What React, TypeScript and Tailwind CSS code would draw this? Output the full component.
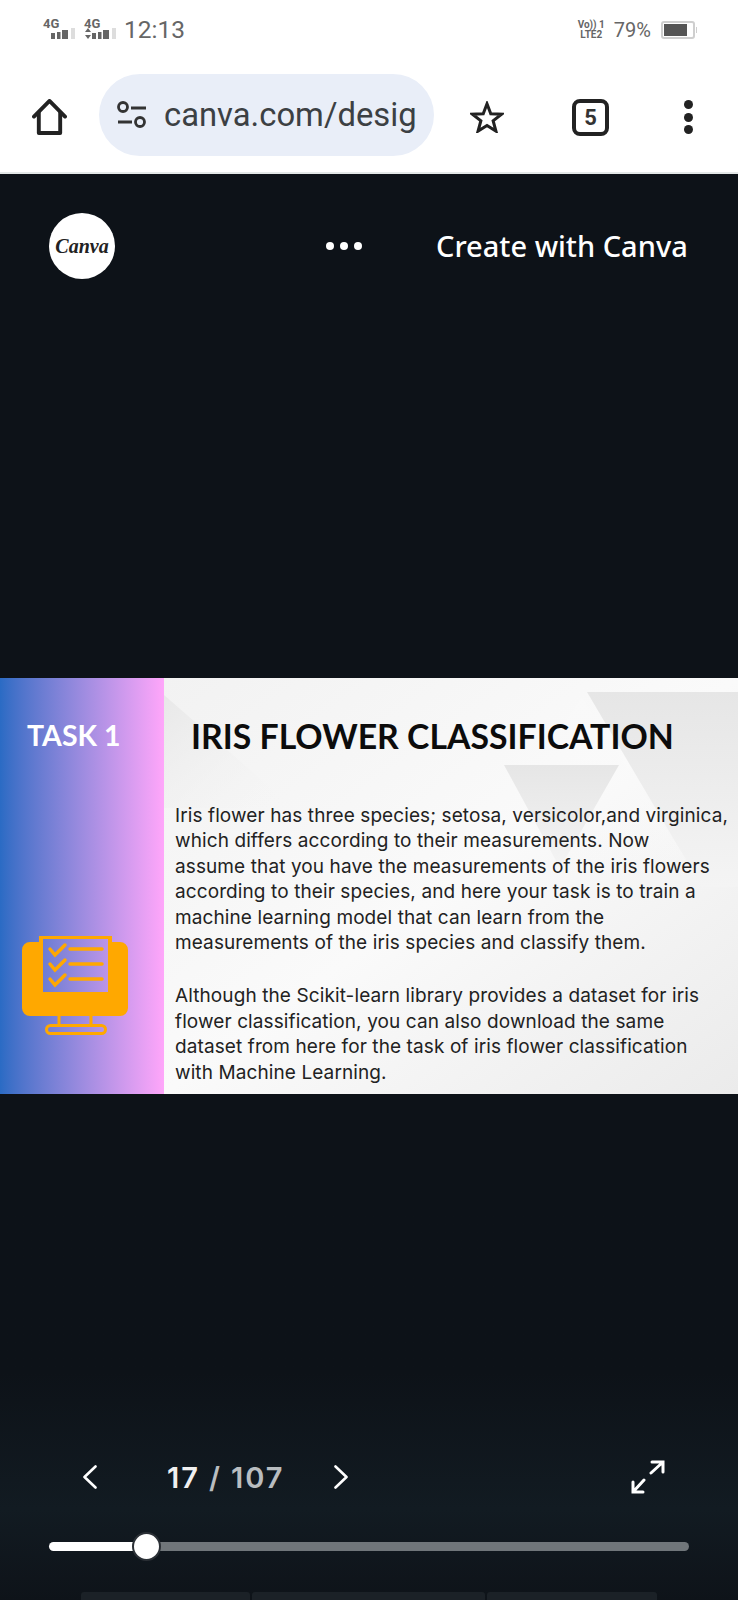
function SignalBars({ arrows }: { arrows?: boolean }) {
  return (
    <svg width="33" height="11" viewBox="0 0 33 11" className="absolute left-0 top-[10px]">
      {arrows && <path d="M4 0 L7 4 H1 Z M4 11 L1 7 H7 Z" fill="#666" />}
      <rect x="8" y="5" width="4" height="6" fill="#666" />
      <rect x="14" y="4" width="3.5" height="7" fill="#666" />
      <rect x="19" y="2" width="6" height="9" fill="#666" />
      <rect x="28" y="0" width="4" height="11" fill="#ddd" />
    </svg>
  );
}

function StatusBar() {
  return (
    <div className="flex h-[60px] items-center justify-between pl-[43px] pr-[41px] text-[#666]">
      <div className="flex items-center">
        <div className="relative h-[24px] w-[32px]">
          <span className="absolute left-0 top-[-1px] text-[13px] font-bold leading-[14px]">4G</span>
          <SignalBars />
        </div>
        <div className="relative ml-[9px] h-[24px] w-[32px]">
          <span className="absolute left-0 top-[-1px] text-[13px] font-bold leading-[14px]">4G</span>
          <SignalBars arrows />
        </div>
        <span className="ml-[8px] text-[24.5px] leading-none">12:13</span>
      </div>
      <div className="flex items-center">
        <div className="flex flex-col items-center text-[10px] font-bold leading-[10px]">
          <span>Vo)) 1</span>
          <span>LTE2</span>
        </div>
        <span className="ml-[9px] text-[20px] leading-none">79%</span>
        <div className="ml-[10px] flex h-[18px] w-[34px] items-center rounded-[3px] border-2 border-[#cfcfcf] pl-[1px]">
          <div className="h-[12px] w-[23px] bg-[#555]" />
        </div>
        <div className="ml-[1px] h-[6px] w-[1px] bg-[#cfcfcf]" />
      </div>
    </div>
  );
}

function Toolbar() {
  return (
    <div className="flex h-[114px] items-start border-b-2 border-[#e3e7e7] pt-[14px]">
      <div className="flex h-[86px] w-[99px] items-center pl-[32px]">
        <svg width="35" height="37" viewBox="0 0 36 38" fill="none" stroke="#222" strokeWidth="4" strokeLinejoin="round" strokeLinecap="round">
          <path d="M2 18 L18 2 L34 18" />
          <path d="M7 14 V35 H29 V14" />
        </svg>
      </div>
      <div className="flex h-[82px] w-[335px] items-center rounded-full bg-[#e9eef8] pl-[17px]">
        <svg width="32" height="28" viewBox="0 0 32 28" fill="none" stroke="#333" strokeWidth="2.8" className="shrink-0">
          <circle cx="7" cy="6" r="4.5" />
          <circle cx="24" cy="21" r="4.5" />
          <path d="M15 7 H30 M2 21 H16" />
        </svg>
        <span className="ml-[16px] text-[32.8px] leading-none whitespace-nowrap text-[#3c4043]">
          canva.com/desig
        </span>
      </div>
      <div className="ml-[35px] flex h-[86px] w-[36px] items-center justify-center">
        <svg width="34" height="32" viewBox="0 0 36 34" fill="none" stroke="#222" strokeWidth="3.2" strokeLinejoin="miter">
          <path d="M18 3 L22 13.5 L33.5 14 L24.5 21 L27.5 32 L18 26 L8.5 32 L11.5 21 L2.5 14 L14 13.5 Z" />
        </svg>
      </div>
      <div className="ml-[67px] flex h-[86px] items-center">
        <div className="flex h-[37px] w-[37px] items-center justify-center rounded-[8px] border-4 border-[#222] text-[22px] font-bold text-[#333]">
          5
        </div>
      </div>
      <div className="ml-[75px] flex h-[86px] flex-col items-center justify-center gap-[3.5px]">
        <div className="h-[9px] w-[9px] rounded-full bg-[#222]" />
        <div className="h-[9px] w-[9px] rounded-full bg-[#222]" />
        <div className="h-[9px] w-[9px] rounded-full bg-[#222]" />
      </div>
    </div>
  );
}

function CanvaHeader() {
  return (
    <div className="flex h-[504px] items-start pt-[39px] pl-[49px]">
      <div className="flex h-[66px] w-[66px] items-center justify-center rounded-full bg-white">
        <span className="text-[20px] font-bold italic text-[#222] [font-family:'Liberation_Serif',serif]">Canva</span>
      </div>
      <div className="ml-[211px] flex h-[66px] items-center gap-[6px]">
        <div className="h-[8px] w-[8px] rounded-full bg-white" />
        <div className="h-[8px] w-[8px] rounded-full bg-white" />
        <div className="h-[8px] w-[8px] rounded-full bg-white" />
      </div>
      <div className="ml-[74px] flex h-[66px] items-center whitespace-nowrap text-[29px] font-medium text-white [font-family:'Noto_Sans',sans-serif]">
        Create with Canva
      </div>
    </div>
  );
}

function TaskIcon() {
  return (
    <svg width="106" height="100" viewBox="0 0 106 100" fill="none" stroke="#ffa800">
      <path
        fill="#ffa800"
        stroke="none"
        fillRule="evenodd"
        d="M8 7 H17 V1 H90 V7 H98 a8 8 0 0 1 8 8 V73 a8 8 0 0 1-8 8 H8 a8 8 0 0 1-8-8 V15 a8 8 0 0 1 8-8Z M21 4 V57 H86 V4Z"
      />
      <g strokeWidth="3.5" strokeLinecap="round">
        <path d="M28 14 L33 20 L43 10 M48 14 H80" />
        <path d="M28 29 L33 35 L43 25 M48 29 H80" />
        <path d="M28 44 L33 50 L43 40 M48 44 H80" />
      </g>
      <path d="M37 81 V91 M69 81 V91" strokeWidth="3" />
      <rect x="24.5" y="90.5" width="59" height="8" rx="4" strokeWidth="3" />
    </svg>
  );
}

function Slide() {
  return (
    <div className="flex h-[416px] w-full">
      <div className="flex w-[164px] shrink-0 flex-col bg-gradient-to-r from-[#2a6bc4] to-[#ffa6fa]">
        <div className="mt-[39px] pl-[27px] text-[28.5px] font-bold leading-[36px] text-white [font-family:Lato,sans-serif]">TASK 1</div>
        <div className="mt-[182px] pl-[22px]">
          <TaskIcon />
        </div>
      </div>
      <div className="relative flex-1 overflow-hidden bg-gradient-to-br from-[#f2f2f2] via-[#fafafa] to-[#ebebeb]">
        {/* faint triangles behind the text */}
        <svg width="574" height="416" viewBox="0 0 574 416" className="absolute left-0 top-0">
          <defs>
            <linearGradient id="fadeDown" x1="0" y1="0" x2="0" y2="1">
              <stop offset="0" stopColor="#e6e6e6" />
              <stop offset="1" stopColor="#f4f4f4" />
            </linearGradient>
            <linearGradient id="fadeRight" x1="0" y1="0" x2="1" y2="1">
              <stop offset="0" stopColor="#e8e8e8" />
              <stop offset="1" stopColor="#f6f6f6" stopOpacity="0" />
            </linearGradient>
            <linearGradient id="paleDown" x1="0" y1="0" x2="0" y2="1">
              <stop offset="0" stopColor="#f9f9f9" stopOpacity="0.9" />
              <stop offset="1" stopColor="#f9f9f9" stopOpacity="0" />
            </linearGradient>
          </defs>
          <path d="M0 17 L130 130 L0 130 Z" fill="url(#fadeRight)" />
          <path d="M423 14 H574 V209 H538 Z" fill="url(#fadeDown)" />
          <path d="M418 19 L540 209 H290 Z" fill="url(#paleDown)" />
          <path d="M340 87 H455 L396 190 Z" fill="url(#fadeDown)" />
        </svg>
        <div className="relative">
          <h1 className="mt-[39px] ml-[27px] whitespace-nowrap text-[33.8px] font-bold leading-[38px] text-[#0c0c0c] [font-family:Lato,sans-serif]">
            IRIS FLOWER CLASSIFICATION
          </h1>
          <p className="mt-[48px] ml-[11px] whitespace-nowrap text-[19px] leading-[25.4px] tracking-[0.1px] text-[#222] [font-family:Inter,sans-serif]">
            Iris flower has three species; setosa, versicolor,and virginica,
            <br />
            which differs according to their measurements. Now
            <br />
            assume that you have the measurements of the iris flowers
            <br />
            according to their species, and here your task is to train a
            <br />
            machine learning model that can learn from the
            <br />
            measurements of the iris species and classify them.
          </p>
          <p className="mt-[28px] ml-[11px] whitespace-nowrap text-[19px] leading-[25.4px] tracking-[0.1px] text-[#222] [font-family:Inter,sans-serif]">
            Although the Scikit-learn library provides a dataset for iris
            <br />
            flower classification, you can also download the same
            <br />
            dataset from here for the task of iris flower classification
            <br />
            with Machine Learning.
          </p>
        </div>
      </div>
    </div>
  );
}

function Controls() {
  return (
    <div className="flex flex-1 flex-col bg-gradient-to-b from-[#0d1218] from-55% via-[#121b22] via-82% to-[#0e1319] pt-[366px]">
      <div className="flex h-[34px] items-center text-white">
        <svg width="14" height="24" viewBox="0 0 14 24" fill="none" stroke="#fff" strokeWidth="2.6" strokeLinecap="round" strokeLinejoin="round" className="ml-[83px]">
          <path d="M12.5 1.5 L1.5 12 L12.5 22.5" />
        </svg>
        <span className="ml-[70px] whitespace-nowrap text-[29px] font-semibold leading-none tracking-[1.9px] [font-family:Inter,sans-serif]">
          <span className="text-[#f0f0f0]">17</span>
          <span className="text-[#b9bdc0]"> / 107</span>
        </span>
        <svg width="14" height="24" viewBox="0 0 14 24" fill="none" stroke="#fff" strokeWidth="2.6" strokeLinecap="round" strokeLinejoin="round" className="ml-[50px]">
          <path d="M1.5 1.5 L12.5 12 L1.5 22.5" />
        </svg>
        <svg width="34" height="34" viewBox="0 0 34 34" fill="none" stroke="#fff" strokeWidth="3" strokeLinecap="round" className="ml-[283px]">
          <path d="M20 13 L32 2 M21 2 H32 V12" />
          <path d="M13 20 L2 32 M2 22 V32 H12" />
        </svg>
      </div>
      <div className="relative mx-[49px] mt-[48px] flex h-[9px]">
        <div className="w-[97px] rounded-l-full bg-white" />
        <div className="flex-1 rounded-r-full bg-[#70767a]" />
        <div className="absolute left-[83px] top-[-10px] h-[29px] w-[29px] rounded-full border-2 border-[#2b3036] bg-white" />
      </div>
      <div className="flex-1" />
      <div className="flex h-[8px] gap-[2px] pl-[81px]">
        <div className="w-[169px] rounded-t-[3px] bg-[#1b2127]" />
        <div className="w-[233px] rounded-t-[3px] bg-[#1b2127]" />
        <div className="w-[170px] rounded-t-[3px] bg-[#1b2127]" />
      </div>
    </div>
  );
}

export default function App() {
  return (
    <div className="flex h-[1600px] w-[738px] flex-col overflow-hidden bg-white [font-family:Roboto,sans-serif]">
      <StatusBar />
      <Toolbar />
      <div className="flex flex-1 flex-col bg-[#0d1218]">
        <CanvaHeader />
        <Slide />
        <Controls />
      </div>
    </div>
  );
}
